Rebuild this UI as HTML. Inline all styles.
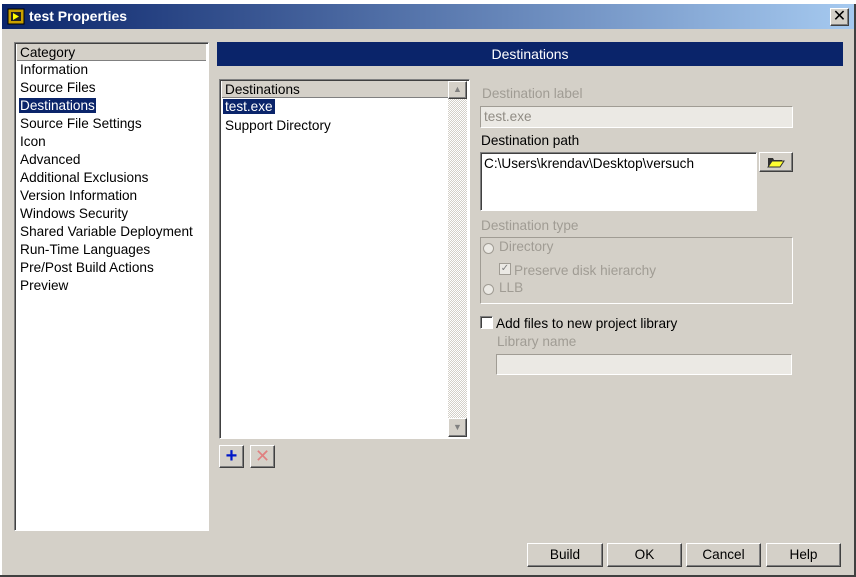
<!DOCTYPE html>
<html><head><style>
*{margin:0;padding:0;box-sizing:border-box}
body{width:856px;height:577px;background:#d4d0c8;font-family:"Liberation Sans",sans-serif;font-size:13.6px;color:#000;position:relative;overflow:hidden}
.a{position:absolute}
.sunk{border:1px solid;border-color:#808080 #fff #fff #808080;box-shadow:inset 1px 1px 0 #404040}
.btn{position:absolute;background:#d4d0c8;border:1px solid;border-color:#fff #404040 #404040 #fff;box-shadow:inset -1px -1px 0 #808080;text-align:center;line-height:21px}
.dis{color:#a09c94}
.it{position:absolute;left:5px;white-space:nowrap}
</style></head><body>
<div class="a" style="left:0;top:0;width:856px;height:4px;background:#fff"></div>
<div class="a" style="left:0;top:4px;width:856px;height:25px;background:linear-gradient(90deg,#0a246a,#a6caf0)"></div>
<div class="a" style="left:0;top:4px;width:2px;height:573px;background:#fff"></div>
<div class="a" style="right:0;top:4px;width:2px;height:573px;background:#404040"></div>
<div class="a" style="left:0;bottom:0;width:856px;height:2px;background:#404040"></div>
<svg class="a" style="left:7px;top:8px" width="18" height="17"><rect x="1" y="1" width="16" height="15" fill="#c8a000" stroke="#000"/><rect x="4" y="4" width="10" height="9" fill="#222"/><path d="M6 5l6 3.5-6 3.5z" fill="#ff0"/></svg>
<div class="a" style="left:29px;top:8px;color:#fff;font-weight:bold;font-size:14px">test Properties</div>
<div class="btn" style="left:830px;top:8px;width:19px;height:18px;line-height:16px;font-size:16px">✕</div>

<div class="a sunk" style="left:14px;top:42px;width:195px;height:489px;background:#fff">
<div class="a" style="left:2px;top:1px;width:189px;height:17px;background:#d4d0c8;border-bottom:1px solid #808080;padding-left:3px;line-height:17px">Category</div>
<div class="it" style="top:19px">Information</div>
<div class="it" style="top:37px">Source Files</div>
<div class="it" style="top:55px;left:4px;background:#0a246a;color:#fff;padding:0 1px;outline:1px dotted #fff">Destinations</div>
<div class="it" style="top:73px">Source File Settings</div>
<div class="it" style="top:91px">Icon</div>
<div class="it" style="top:109px">Advanced</div>
<div class="it" style="top:127px">Additional Exclusions</div>
<div class="it" style="top:145px">Version Information</div>
<div class="it" style="top:163px">Windows Security</div>
<div class="it" style="top:181px">Shared Variable Deployment</div>
<div class="it" style="top:199px">Run-Time Languages</div>
<div class="it" style="top:217px">Pre/Post Build Actions</div>
<div class="it" style="top:235px">Preview</div>
</div>

<div class="a" style="left:217px;top:42px;width:626px;height:24px;background:#0a246a;color:#fff;text-align:center;line-height:24px;font-size:14px">Destinations</div>

<div class="a sunk" style="left:219px;top:79px;width:251px;height:360px;background:#fff">
<div class="a" style="left:2px;top:1px;width:226px;height:17px;background:#d4d0c8;border-bottom:1px solid #808080;padding-left:3px;line-height:17px">Destinations</div>
<div class="it" style="top:19px;left:3px;background:#0a246a;color:#fff;padding:0 2px">test.exe</div>
<div class="it" style="top:38px">Support Directory</div>
<div class="a" style="left:228px;top:1px;width:19px;height:356px;background:repeating-conic-gradient(#fff 0 25%,#d4d0c8 0 50%) 0 0/2px 2px"></div>
<div class="btn" style="left:228px;top:1px;width:19px;height:18px;line-height:14px;font-size:9px;color:#808080">▲</div>
<div class="btn" style="left:228px;top:338px;width:19px;height:19px;line-height:16px;font-size:9px;color:#808080">▼</div>
</div>
<div class="btn" style="left:219px;top:445px;width:25px;height:23px;color:#0018c8;font-size:20px;font-weight:bold;line-height:20px">+</div>
<div class="btn" style="left:250px;top:445px;width:25px;height:23px;color:#e08080;font-size:18px;line-height:20px">✕</div>

<div class="a dis" style="left:482px;top:86px">Destination label</div>
<div class="a" style="left:480px;top:106px;width:313px;height:22px;background:#ebe9e4;border:1px solid;border-color:#a09c94 #fff #fff #a09c94;color:#908c84;padding-left:3px;line-height:19px">test.exe</div>
<div class="a" style="left:481px;top:133px">Destination path</div>
<div class="a sunk" style="left:480px;top:152px;width:277px;height:59px;background:#fff;padding:3px 0 0 3px">C:\Users\krendav\Desktop\versuch</div>
<div class="btn" style="left:759px;top:152px;width:34px;height:20px">
<svg width="20" height="14" style="margin-top:2px"><path d="M2 3h5l1 2h8v2H6L3 12H2z" fill="#303030"/><path d="M2 12L6 6h12l-4 6z" fill="#ffff30" stroke="#303030"/></svg></div>
<div class="a dis" style="left:481px;top:218px">Destination type</div>
<div class="a" style="left:480px;top:237px;width:313px;height:67px;border:1px solid;border-color:#a09c94 #fff #fff #a09c94"></div>
<div class="a" style="left:483px;top:243px;width:11px;height:11px;border-radius:50%;background:#ebe9e4;border:1px solid #a09c94"></div>
<div class="a dis" style="left:499px;top:239px">Directory</div>
<div class="a" style="left:499px;top:263px;width:12px;height:12px;background:#ebe9e4;border:1px solid #a09c94;font-size:10px;line-height:10px;color:#808080;text-align:center">✓</div>
<div class="a dis" style="left:514px;top:263px">Preserve disk hierarchy</div>
<div class="a" style="left:483px;top:284px;width:11px;height:11px;border-radius:50%;background:#ebe9e4;border:1px solid #a09c94"></div>
<div class="a dis" style="left:499px;top:280px">LLB</div>
<div class="a sunk" style="left:480px;top:316px;width:13px;height:13px;background:#fff"></div>
<div class="a" style="left:496px;top:316px">Add files to new project library</div>
<div class="a dis" style="left:497px;top:334px">Library name</div>
<div class="a" style="left:496px;top:354px;width:296px;height:21px;background:#ebe9e4;border:1px solid;border-color:#a09c94 #fff #fff #a09c94"></div>

<div class="btn" style="left:527px;top:543px;width:76px;height:24px">Build</div>
<div class="btn" style="left:607px;top:543px;width:75px;height:24px">OK</div>
<div class="btn" style="left:686px;top:543px;width:75px;height:24px">Cancel</div>
<div class="btn" style="left:766px;top:543px;width:75px;height:24px">Help</div>
</body></html>
